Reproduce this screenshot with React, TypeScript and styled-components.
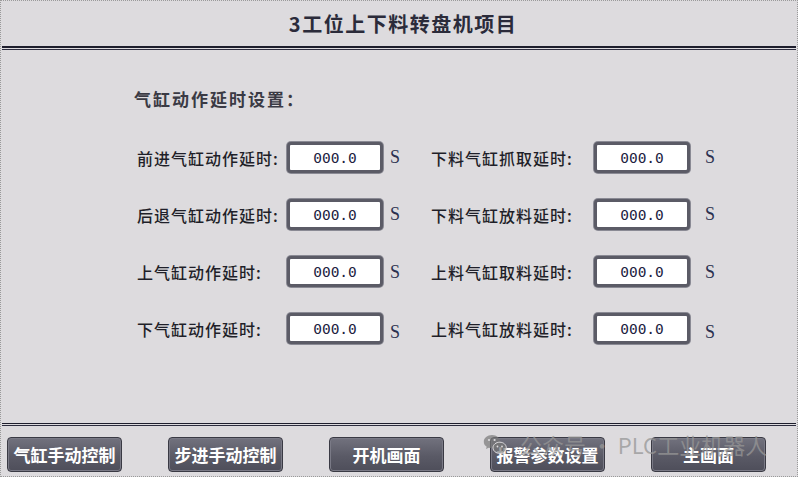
import styled, { createGlobalStyle } from "styled-components";

const GlobalStyle = createGlobalStyle`
  html, body {
    margin: 0;
    padding: 0;
    background: #dddbde;
  }
`;

const cjk = `"Noto Sans CJK SC", "Noto Sans", sans-serif`;

const Frame = styled.div`
  position: relative;
  width: 798px;
  height: 477px;
  box-sizing: border-box;
  border: 1px dotted #9a9a9a;
  background: #dddbde;
  display: flex;
  flex-direction: column;
  font-family: ${cjk};
  overflow: hidden;
`;

const Header = styled.header`
  height: 45px;
  display: flex;
  align-items: center;
  justify-content: center;
  padding-left: 8px;
`;

const Title = styled.h1`
  margin: 0;
  font-size: 20px;
  font-weight: 700;
  letter-spacing: 1.5px;
  color: #2b2b3a;
`;

const DoubleRule = styled.div<{ $top: number }>`
  margin: 0 1px;
  height: 1px;
  border-top: ${({ $top }) => $top}px solid #1d1d2c;
  border-bottom: 1px solid #2c2c3e;
`;

const Main = styled.main`
  flex: 1;
  padding: 39px 0 0 133px;
`;

const Heading = styled.h2`
  margin: 0 0 33px;
  font-size: 17px;
  line-height: 20px;
  font-weight: 700;
  letter-spacing: 2px;
  color: #3a3a44;
`;

const Grid = styled.div`
  margin-left: 3px;
  display: grid;
  grid-template-columns: 150px 96px 48px 163px 96px auto;
  grid-auto-rows: 31px;
  row-gap: 26px;
  align-items: center;
`;

const Label = styled.span`
  font-size: 16px;
  font-weight: 500;
  letter-spacing: 1px;
  color: #1f1f29;
  white-space: nowrap;
`;

const ValueBox = styled.div`
  box-sizing: border-box;
  width: 96px;
  height: 31px;
  border: 3px solid #5b5b66;
  border-radius: 4px;
  box-shadow: 0 0 0 1px #8a8a94;
  background: #ffffff;
  display: flex;
  align-items: center;
  justify-content: center;
  font-family: "DejaVu Sans Mono", "Liberation Mono", monospace;
  font-size: 14.5px;
  color: #22223f;
`;

const Unit = styled.span<{ $pad: number; $drop: number }>`
  padding-left: ${({ $pad }) => $pad}px;
  position: relative;
  top: ${({ $drop }) => $drop}px;
  font-family: "Liberation Serif", serif;
  font-size: 18px;
  color: #2b3050;
`;

const Footer = styled.footer`
  display: flex;
  gap: 46px;
  padding: 11px 0 4px 6px;
`;

const Button = styled.button`
  box-sizing: border-box;
  width: 115px;
  height: 35px;
  padding: 0;
  border: 1px solid #3a3a44;
  border-radius: 4px;
  background: linear-gradient(#72727e, #5a5a66 55%, #4e4e5a);
  box-shadow: inset 0 0 0 1px #7a7a86;
  color: #ffffff;
  font-family: ${cjk};
  font-size: 17px;
  font-weight: 700;
`;

const Watermark = styled.div`
  position: absolute;
  left: 482px;
  top: 428px;
  display: flex;
  align-items: center;
  gap: 13px;
  color: rgba(150, 150, 150, 0.75);
  font-size: 22px;
  line-height: 30px;
  pointer-events: none;
  white-space: nowrap;
`;

const rows = [
  { left: "前进气缸动作延时:", right: "下料气缸抓取延时:", drop: 0 },
  { left: "后退气缸动作延时:", right: "下料气缸放料延时:", drop: 0 },
  { left: "上气缸动作延时:", right: "上料气缸取料延时:", drop: 1 },
  { left: "下气缸动作延时:", right: "上料气缸放料延时:", drop: 4 },
];

const buttons = ["气缸手动控制", "步进手动控制", "开机画面", "报警参数设置", "主画面"];

const WeChatIcon = () => (
  <svg width="24" height="20" viewBox="0 0 24 20">
    <path
      d="M9 1C4.3 1 .8 4 .8 7.7c0 2.1 1.1 3.9 2.9 5.1l-.7 2.3 2.7-1.4c1 .3 2.1.4 3.3.4C13.7 14.1 17.2 11.1 17.2 7.4 17.2 4 13.7 1 9 1z"
      fill="rgba(120,120,120,0.7)"
    />
    <path
      d="M16.8 8.2c-3.8 0-6.8 2.5-6.8 5.6s3 5.6 6.8 5.6c.8 0 1.6-.1 2.3-.3l2.2 1.1-.6-1.8c1.6-1 2.6-2.6 2.6-4.6 0-3.1-2.8-5.6-6.5-5.6z"
      fill="rgba(120,120,120,0.7)"
      stroke="#dddbde"
      strokeWidth="1"
    />
    <circle cx="6" cy="6" r="1.1" fill="#dddbde" />
    <circle cx="11.6" cy="6" r="1.1" fill="#dddbde" />
    <circle cx="14.5" cy="12.5" r="0.9" fill="#dddbde" />
    <circle cx="19" cy="12.5" r="0.9" fill="#dddbde" />
  </svg>
);

const App = () => {
  return (
    <>
      <GlobalStyle />
      <Frame>
        <Header>
          <Title>3工位上下料转盘机项目</Title>
        </Header>
        <DoubleRule $top={2} />
        <Main>
          <Heading>气缸动作延时设置：</Heading>
          <Grid>
            {rows.map((row) => (
              <>
                <Label key={row.left}>{row.left}</Label>
                <ValueBox>000.0</ValueBox>
                <Unit $pad={7} $drop={row.drop}>S</Unit>
                <Label>{row.right}</Label>
                <ValueBox>000.0</ValueBox>
                <Unit $pad={15} $drop={row.drop}>S</Unit>
              </>
            ))}
          </Grid>
        </Main>
        <DoubleRule $top={1} />
        <Footer>
          {buttons.map((b) => (
            <Button key={b}>{b}</Button>
          ))}
        </Footer>
        <Watermark>
          <WeChatIcon />
          <span>公众号 · PLC工业机器人</span>
        </Watermark>
      </Frame>
    </>
  );
};

export default App;
